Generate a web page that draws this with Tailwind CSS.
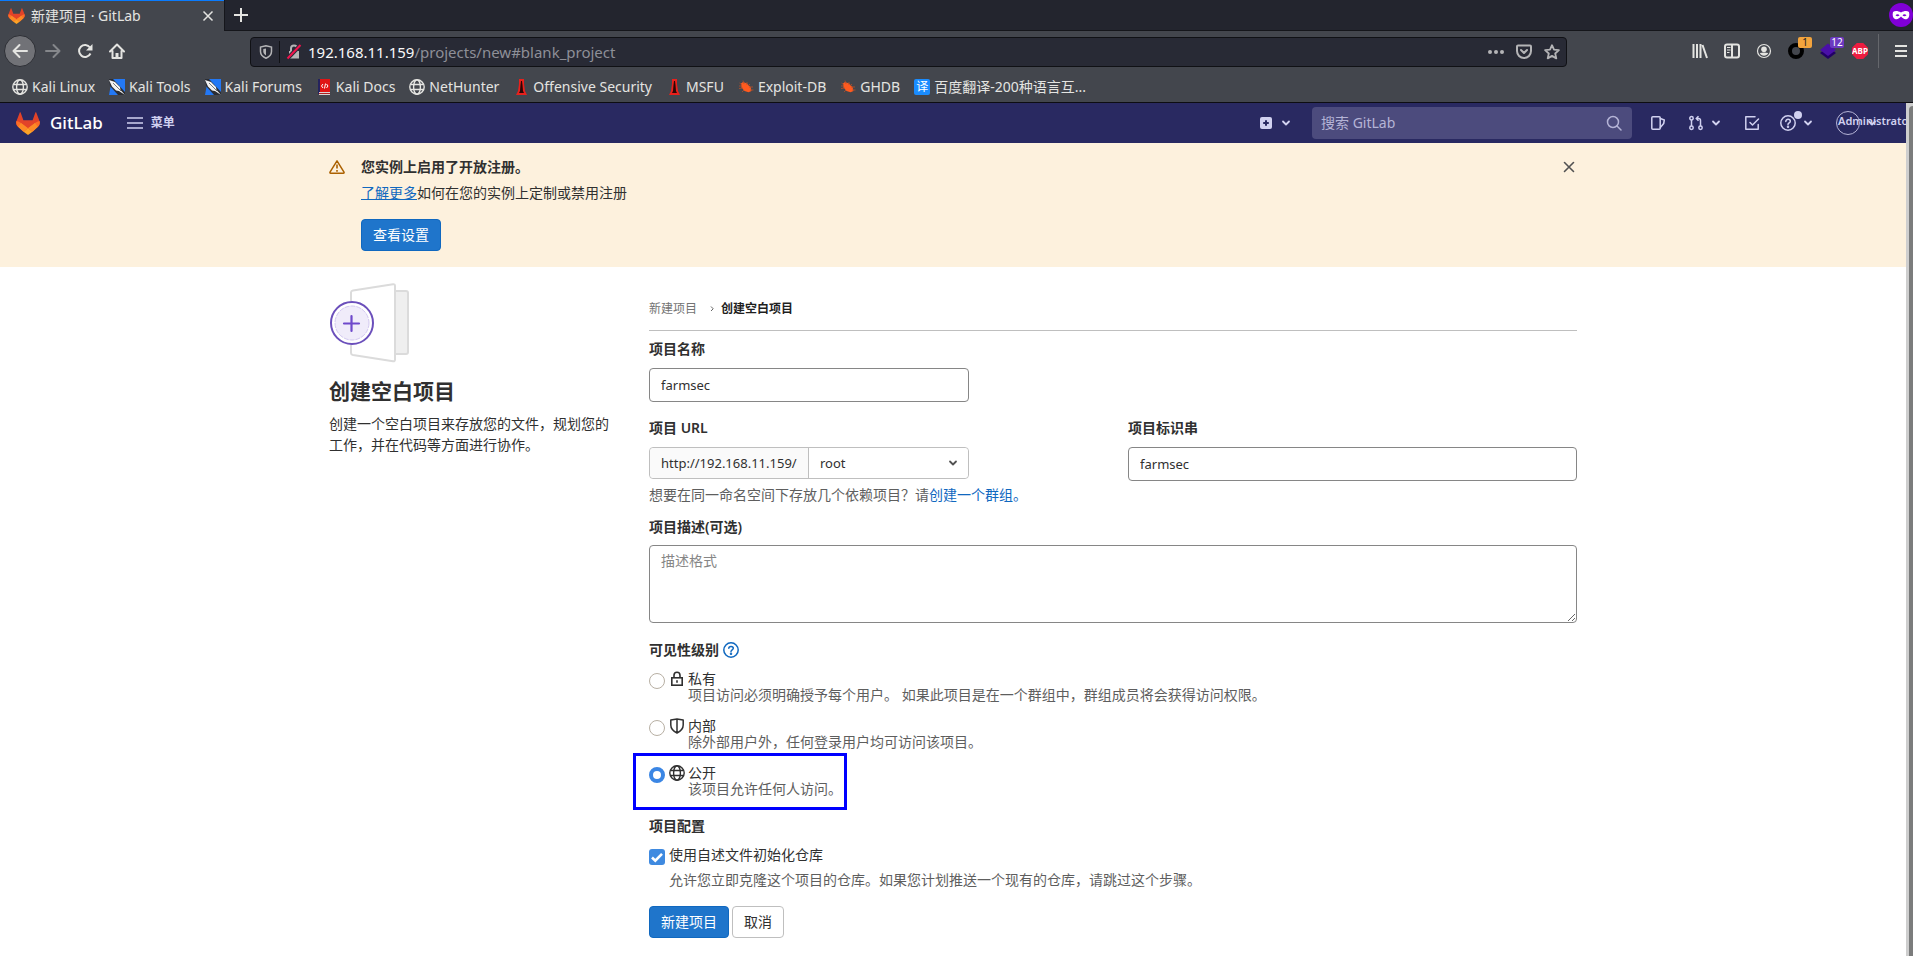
<!DOCTYPE html>
<html lang="zh-CN">
<head>
<meta charset="utf-8">
<title>新建项目 · GitLab</title>
<script src="https://cdn.jsdelivr.net/npm/@tailwindcss/browser@4"></script>
</head>
<body class="flex min-h-screen flex-col bg-white font-['Noto_Sans','Noto_Sans_CJK_SC',sans-serif] text-sm text-[#303030]">
<svg class="hidden">
  <defs>
    <symbol id="tanuki" viewBox="0 0 25 24">
      <path d="M24.5 9.500 21.200.7c-.2-.5-.9-.5-1.100 0L17.300 8.500H7.700L4.900.7C4.700.2 4 .2 3.800.7L.5 9.500c-.8 2.100-.1 4.500 1.700 5.900L12.500 23l10.300-7.600c1.800-1.400 2.500-3.800 1.700-5.900Z" fill="#e24329"/>
      <path d="M24.500 9.500c-1.700.4-3.300 1.100-4.700 2.100L12.500 17l4.700 3.600 5.600-5.200c1.800-1.400 2.500-3.800 1.700-5.900Z" fill="#fc6d26"/>
      <path d="M.5 9.500c1.700.4 3.300 1.100 4.700 2.100L12.500 17l-4.700 3.600-5.600-5.200C.4 14-.3 11.600.5 9.500Z" fill="#fc6d26"/>
      <path d="m7.800 20.600 4.700 3.400 4.700-3.400L12.500 17Z" fill="#fca326"/>
      <path d="m2.200 15.400 5.600 5.200L12.500 17 5.200 11.600Z" fill="#fc8a26"/>
      <path d="m22.800 15.400-5.600 5.200L12.500 17l7.300-5.400Z" fill="#fc8a26"/>
    </symbol>
    <symbol id="globe" viewBox="0 0 16 16">
      <g fill="none" stroke="currentColor" stroke-width="1.400"><circle cx="8" cy="8" r="7.200"/><ellipse cx="8" cy="8" rx="3.400" ry="7.200"/><path d="M1.500 5.500h13M1.500 10.500h13"/></g>
    </symbol>
    <symbol id="chev" viewBox="0 0 16 16">
      <path d="m5 6.500 3 3 3-3" fill="none" stroke="currentColor" stroke-width="1.800" stroke-linecap="round" stroke-linejoin="round"/>
    </symbol>
    <symbol id="kali" viewBox="0 0 16 16">
      <path d="M3 0h13v13L13 16H0z" fill="#2378f5"/><path d="M0 0h4l12 13v3H9L1 7z" fill="#2b2d33"/>
      <path d="M0 1l6 2 5 5 .5 3L16 16l-6-4-3-.5-4-4z" fill="#f3f3f3"/><path d="m4 4 8 8" stroke="#55585f" stroke-width=".8"/>
    </symbol>
    <symbol id="tower" viewBox="0 0 16 16">
      <path d="M6 0h5v5l1 7 2 4H3l2-4 1-7z" fill="#e8201c"/><path d="M8 2h1l.5 4 .5 6 1 2H6l1-2 .5-6z" fill="#2a0606"/>
    </symbol>
    <symbol id="bug" viewBox="0 0 16 16">
      <path d="M3 4.500 5 3l4 1.500 3.500 3.500 1 4-3 1.200L6.500 12 3.500 8.500z" fill="#ff5a1f"/>
      <path d="M1 7h3M1.500 4 4 6M5 1.500 6 5M9 3v3M12 5l-2 2M15 8h-4M15.500 11H12M1 9.500l4-.5M4 13l2-2" stroke="#b8502a" stroke-width=".8"/>
    </symbol>
  </defs>
</svg>

<!-- Browser chrome -->
<header class="flex flex-col bg-[#43464d] text-[#e4e4e1]">
  <div class="flex h-[31px] items-stretch bg-[#23252e]">
    <div class="flex w-56 items-center border-t border-[#0a7cff] bg-[#43464d] pr-2.5 pl-2">
      <svg class="mr-1.5 h-4 w-[17px]"><use href="#tanuki"/></svg>
      <span class="grow leading-5">新建项目 · GitLab</span>
      <button aria-label="关闭标签页"><svg class="size-3" viewBox="0 0 12 12" fill="none" stroke="currentColor" stroke-width="1.500"><path d="m1.500 1.500 9 9m0-9-9 9"/></svg></button>
    </div>
    <div class="flex grow items-center justify-between border-b border-l border-[#15161b] pl-2">
      <button aria-label="新标签页"><svg class="size-4" viewBox="0 0 16 16" fill="none" stroke="currentColor" stroke-width="2"><path d="M8 1v14M1 8h14"/></svg></button>
      <svg class="size-6" viewBox="0 0 24 24"><circle cx="12" cy="12" r="12" fill="#8000d7"/><path fill-rule="evenodd" d="M4 9c2-1.500 5-1.200 8 .5 3-1.700 6-2 8-.5.800 3 .2 6-2 7-2.500.8-4.500-.7-6-2.400-1.500 1.700-3.500 3.200-6 2.400C3.800 15 3.200 12 4 9Zm2.500 3.300c1.200 1.300 3 1.300 4 0-1-1.400-2.800-1.400-4 0Zm7 0c1 1.300 2.800 1.300 4 0-1.200-1.400-3-1.400-4 0Z" fill="#fff"/></svg>
    </div>
  </div>

  <div class="flex h-10 items-center pr-1.5 pl-1">
    <nav class="flex w-[246px] items-center" aria-label="浏览器导航">
      <button aria-label="后退" class="flex size-8 items-center justify-center rounded-full border border-[#2d2f35] bg-[#717277]"><svg class="size-4" viewBox="0 0 16 16" fill="none" stroke="currentColor" stroke-width="2" stroke-linecap="round" stroke-linejoin="round"><path d="M15 8H1.500M7.500 2l-6 6 6 6"/></svg></button>
      <button aria-label="前进" class="ml-[9px] text-[#85878b]"><svg class="size-4" viewBox="0 0 16 16" fill="none" stroke="currentColor" stroke-width="2" stroke-linecap="round" stroke-linejoin="round"><path d="M1 8h13.500M8.500 2l6 6-6 6"/></svg></button>
      <button aria-label="刷新" class="ml-4"><svg class="size-4" viewBox="0 0 16 16" fill="none" stroke="currentColor" stroke-width="2"><path d="M13.500 10.500A6 6 0 1 1 13 4.500"/><path d="M15.500 1v6.500H9z" fill="currentColor" stroke="none"/></svg></button>
      <button aria-label="主页" class="ml-4"><svg class="size-4" viewBox="0 0 16 16" fill="none" stroke="currentColor" stroke-width="2" stroke-linejoin="round" stroke-linecap="round"><path d="m1 8.500 7-7 7 7M3.500 8v7h9V8"/><path d="M8 10v4" stroke-width="3" stroke-linecap="butt"/></svg></button>
    </nav>
    <div class="mt-px flex h-[30px] grow items-center rounded border border-[#101115] bg-[#282a35] pr-1.5 pl-2 text-[#b4b4b6]">
      <svg class="size-3.5" viewBox="0 0 14 14" fill="none" stroke="currentColor" stroke-width="1.500"><path d="M7 .8 1.500 2v4.500c0 3 2 5.200 5.500 6.700 3.500-1.500 5.500-3.700 5.500-6.700V2z"/><path d="M7 3.500v7C5 9.300 4.300 8 4.300 6.500V4z" fill="currentColor" stroke="none"/></svg>
      <span class="ml-1.5 h-[22px] w-px bg-[#101115]"></span>
      <svg class="ml-1.5 size-4" viewBox="0 0 16 16"><path d="M3 7h10v7.500H3z" fill="currentColor"/><path d="M5 7V4.500a3 3 0 0 1 6 0V7" fill="none" stroke="currentColor" stroke-width="2"/><path d="M1.500 14.500 14.500 1" stroke="#282a35" stroke-width="4"/><path d="M1.500 14.500 14.500 1" stroke="#f0134d" stroke-width="2"/></svg>
      <div role="textbox" aria-label="地址" tabindex="0" class="ml-1.5 grow text-[15px] leading-5 text-[#8e8f98]"><span class="text-[#f9f9fa]">192.168.11.159</span>/projects/new#blank_project</div>
      <div class="flex items-center gap-3">
        <svg class="size-4" viewBox="0 0 16 16" fill="currentColor"><circle cx="2" cy="8" r="2"/><circle cx="8" cy="8" r="2"/><circle cx="14" cy="8" r="2"/></svg>
        <svg class="size-4" viewBox="0 0 16 16" fill="none" stroke="currentColor" stroke-width="2" stroke-linecap="round" stroke-linejoin="round"><path d="M2 1.500h12a1 1 0 0 1 1 1V7A7 7 0 0 1 1 7V2.500a1 1 0 0 1 1-1Z"/><path d="m5 6 3 3 3-3"/></svg>
        <svg class="size-4" viewBox="0 0 16 16" fill="none" stroke="currentColor" stroke-width="1.800" stroke-linejoin="round"><path d="m8 1.200 2 4.500 4.900.5-3.700 3.300 1.100 4.900L8 11.900l-4.300 2.500 1.100-4.900L1.100 6.200 6 5.700z"/></svg>
      </div>
    </div>
    <div class="ml-[125px] flex items-center gap-4">
      <svg class="size-4" viewBox="0 0 16 16" stroke="currentColor" stroke-width="2"><path d="M1.500 1v14M5 1v14M8.500 1v14M10.500 2l4.500 13"/></svg>
      <svg class="size-4" viewBox="0 0 16 16" fill="none" stroke="currentColor" stroke-width="2"><rect x="1" y="1.500" width="14" height="13" rx="2"/><path d="M8 2v12"/><path d="M3 4.500h3.500M3 7h3.500M3 9.500h2.500" stroke-width="1"/></svg>
      <svg class="size-4" viewBox="0 0 16 16"><circle cx="8" cy="8" r="6.500" fill="none" stroke="currentColor" stroke-width="1.200"/><circle cx="8" cy="6.200" r="2.800" fill="currentColor"/><path d="M3.800 10c2.500-.8 5.900-.8 8.400 0-1.500 3.600-6.900 3.600-8.400 0Z" fill="currentColor"/></svg>
      <div class="relative"><svg class="size-4" viewBox="0 0 16 16"><circle cx="8" cy="8" r="6" fill="none" stroke="#000" stroke-width="4"/></svg><span class="absolute -top-1.5 left-2.5 w-3.5 rounded-xs bg-[#f3a43d] text-center text-[10px] leading-[11px] text-[#222]">1</span></div>
      <div class="relative"><svg class="size-4" viewBox="0 0 16 16"><path d="m0 10 8-6 8 6-8 6z" fill="#220066"/><path d="m0 7 8-6.500L16 7l-8 6z" fill="#4a0fa8"/></svg><span class="absolute -top-1.5 left-2.5 w-3.5 rounded-xs bg-[#6c3ac0] text-center text-[10px] leading-[11px] text-white">12</span></div>
      <div class="flex size-4 items-center justify-center bg-[#ee1c40] text-[8px] leading-4 font-bold text-white [clip-path:polygon(30%_0,70%_0,100%_30%,100%_70%,70%_100%,30%_100%,0_70%,0_30%)]">ABP</div>
      <div class="-ml-1.5 flex items-center gap-4">
        <span class="h-[34px] w-px bg-[#65676c]"></span>
        <button aria-label="打开菜单"><svg class="h-4 w-3" viewBox="0 0 12 16" stroke="currentColor" stroke-width="2"><path d="M0 3h12M0 8h12M0 13h12"/></svg></button>
      </div>
    </div>
  </div>

  <nav class="flex h-8 items-center gap-3.5 border-b border-[#0d0d12] px-3 text-sm" aria-label="书签">
    <a href="#" class="flex items-center gap-1"><svg class="size-4"><use href="#globe"/></svg>Kali Linux</a>
    <a href="#" class="flex items-center gap-1"><svg class="size-4"><use href="#kali"/></svg>Kali Tools</a>
    <a href="#" class="flex items-center gap-1"><svg class="size-4"><use href="#kali"/></svg>Kali Forums</a>
    <a href="#" class="flex items-center gap-1"><svg class="size-4" viewBox="0 0 16 16"><path d="M2 0h12v13H2z" fill="#e01414"/><path d="M2 0h2v15H2z" fill="#25235e"/><path d="M3 13h11v3H3z" fill="#d9d2d2"/><path d="M3 14.500h11" stroke="#b02020"/><path d="M7 5 5.500 7 7 9M10.500 5 12 7l-1.500 2M9.500 4.500l-1 5" fill="none" stroke="#fff"/></svg>Kali Docs</a>
    <a href="#" class="flex items-center gap-1"><svg class="size-4"><use href="#globe"/></svg>NetHunter</a>
    <a href="#" class="flex items-center gap-1"><svg class="size-4"><use href="#tower"/></svg>Offensive Security</a>
    <a href="#" class="flex items-center gap-1"><svg class="size-4"><use href="#tower"/></svg>MSFU</a>
    <a href="#" class="flex items-center gap-1"><svg class="size-4"><use href="#bug"/></svg>Exploit-DB</a>
    <a href="#" class="flex items-center gap-1"><svg class="size-4"><use href="#bug"/></svg>GHDB</a>
    <a href="#" class="flex items-center gap-1"><span class="flex size-4 items-center justify-center rounded-xs bg-[#1a8cff] text-xs leading-4 text-white">译</span>百度翻译-200种语言互...</a>
  </nav>
</header>

<div class="flex grow">
  <div class="flex min-w-0 grow flex-col">
    <!-- GitLab top bar -->
    <header class="flex h-10 items-center overflow-hidden bg-[#292961] pl-4 text-[#d1d1f0]">
      <a href="#" class="flex items-center gap-2.5 text-[17px] font-medium text-white"><svg class="h-[23px] w-6"><use href="#tanuki"/></svg>GitLab</a>
      <button class="ml-6 flex items-center gap-2 text-xs font-bold"><svg class="size-4" viewBox="0 0 16 16" stroke="currentColor" stroke-width="1.500"><path d="M0 3h16M0 8h16M0 13h16"/></svg>菜单</button>
      <div class="grow"></div>
      <button aria-label="新建" class="flex items-center gap-1"><svg class="size-4" viewBox="0 0 16 16"><rect x="2" y="2" width="12" height="12" rx="2" fill="currentColor"/><path d="M8 5.200v5.600M5.200 8h5.600" stroke="#292961" stroke-width="2"/></svg><svg class="size-4"><use href="#chev"/></svg></button>
      <div class="ml-[18px] flex h-8 w-80 items-center rounded bg-[#4c4b7d] pr-2.5 pl-[9px]">
        <input aria-label="搜索 GitLab" placeholder="搜索 GitLab" class="min-w-0 grow bg-transparent text-sm outline-none placeholder:text-[#b5b4d6]">
        <svg class="size-4 text-[#b5b4d6]" viewBox="0 0 16 16" fill="none" stroke="currentColor" stroke-width="1.500" stroke-linecap="round"><circle cx="7" cy="7" r="5.500"/><path d="m11 11 4 4"/></svg>
      </div>
      <a href="#" aria-label="议题" class="ml-[18px]"><svg class="size-4" viewBox="0 0 16 16" fill="none" stroke="currentColor" stroke-width="1.500" stroke-linejoin="round"><rect x="1.800" y="1.800" width="8.400" height="12.400" rx="1"/><path d="m10.300 3.500 4 1.500-.6 3.500-3.400 4" stroke-linecap="round"/></svg></a>
      <button aria-label="合并请求" class="ml-[22px] flex items-center gap-1"><svg class="size-4" viewBox="0 0 16 16" fill="none" stroke="currentColor" stroke-width="1.500"><circle cx="3.500" cy="3.200" r="1.700"/><circle cx="3.500" cy="12.800" r="1.700"/><circle cx="12.500" cy="12.800" r="1.700"/><path d="M3.500 5v6M12.500 11V5.500a2 2 0 0 0-2-2H8.500M10.500 1.200 8.300 3.500l2.200 2.200"/></svg><svg class="size-4"><use href="#chev"/></svg></button>
      <a href="#" aria-label="待办事项" class="ml-5"><svg class="size-4" viewBox="0 0 16 16" fill="none" stroke="currentColor" stroke-width="1.500" stroke-linecap="round" stroke-linejoin="round"><path d="M11 1.800H1.800v12.400h12.400V9.500"/><path d="m6 7.500 2.500 2.500L14.500 4"/></svg></a>
      <button aria-label="帮助" class="relative ml-5 flex items-center gap-1"><svg class="size-4" viewBox="0 0 16 16" fill="none" stroke="currentColor" stroke-width="1.500"><circle cx="8" cy="8" r="7.200"/><path d="M5.800 6.500C5.800 3.500 10.300 3.800 10.300 6.300 10.300 8 8 7.800 8 9.600" stroke-linecap="round"/><circle cx="8" cy="11.800" r=".5"/></svg><span class="absolute -top-1 left-3.5 size-2 rounded-full bg-[#d1d1f0]"></span><svg class="size-4"><use href="#chev"/></svg></button>
      <button aria-label="用户菜单" class="relative ml-5 flex w-[70px] items-center"><span class="size-6 shrink-0 rounded-full border border-[#b5b4d6]"></span><svg class="ml-1 size-4 shrink-0"><use href="#chev"/></svg><span class="absolute top-0.5 left-0.5 text-[11px] leading-4 font-semibold">Administrator</span></button>
    </header>

    <!-- Sign-up warning -->
    <section class="bg-[#fdf1dd] pt-3.5 pb-4">
      <div class="mx-auto flex w-full max-w-7xl items-start px-4">
        <svg class="mt-0.5 mr-4 size-4 shrink-0 text-[#ab6100]" viewBox="0 0 16 16" fill="none" stroke="currentColor" stroke-width="1.500" stroke-linejoin="round"><path d="M8 1.800 1 13.200q-.4 1 .6 1h12.800q1 0 .6-1Z"/><path d="M8 5.500v4M8 11v1.800" stroke-width="1.600"/></svg>
        <div class="grow">
          <h2 class="leading-5 font-semibold">您实例上启用了开放注册。</h2>
          <p class="mt-1.5 leading-5"><a href="#" class="text-[#1068bf] underline">了解更多</a>如何在您的实例上定制或禁用注册</p>
          <a href="#" class="mt-4 inline-flex h-8 items-center rounded border border-[#1068bf] bg-[#1f75cb] px-[11px] text-white">查看设置</a>
        </div>
        <button aria-label="关闭" class="mt-0.5"><svg class="size-4" viewBox="0 0 16 16" fill="none" stroke="#525252" stroke-width="1.600" stroke-linecap="round"><path d="m3.500 3.500 9 9m0-9-9 9"/></svg></button>
      </div>
    </section>

    <!-- New project -->
    <main class="mx-auto flex w-full max-w-7xl grow">
      <aside class="w-1/4 shrink-0 px-4 pt-4">
        <svg class="h-20 w-[81px]" viewBox="0 0 81 80" fill="none" stroke-linejoin="round">
          <rect x="65" y="8" width="14" height="63" rx="2" fill="#efefef" stroke="#dbdbdb" stroke-width="2"/>
          <path d="M24 7.500 64 1.200q2-.2 2 1.800v73.500q0 2-2 1.800L24 72q-2-.4-2-2V9.500q0-1.600 2-2Z" fill="#fff" stroke="#dbdbdb" stroke-width="2"/>
          <circle cx="23" cy="40" r="22" fill="#fff"/><circle cx="23" cy="40" r="21" stroke="#6b4fbb" stroke-width="2"/>
          <circle cx="23" cy="40" r="17" fill="#f0ecfa" stroke="#d3c9f0" stroke-dasharray="5 1"/>
          <path d="M22.500 33v15M15 40.500h15" stroke="#6e49cb" stroke-width="2.200" stroke-linecap="round"/>
        </svg>
        <h1 class="mt-3 text-[21px] leading-8 font-semibold">创建空白项目</h1>
        <p class="mt-1.5 leading-[21px]">创建一个空白项目来存放您的文件，规划您的工作，并在代码等方面进行协作。</p>
      </aside>

      <form class="w-3/4 px-4 pt-6">
        <nav class="flex h-10 items-center border-b border-[#bfbfbf] pb-1 text-xs" aria-label="面包屑">
          <a href="#" class="text-[#737373]">新建项目</a>
          <svg class="mr-1.5 ml-3 h-2 w-1.5" viewBox="0 0 6 8" fill="none" stroke="#666" stroke-width="1"><path d="m2 1.500 2.200 2.300L2 6"/></svg>
          <a href="#" class="font-semibold text-[#1f1f1f]">创建空白项目</a>
        </nav>

        <label for="name" class="mt-2 block leading-5 font-semibold">项目名称</label>
        <input id="name" value="farmsec" class="mt-[9px] block h-[34px] w-80 rounded border border-[#868686] px-[11px] text-[13px]">

        <div class="mt-4 flex justify-between">
          <div>
            <label for="ns" class="block leading-5 font-semibold">项目 URL</label>
            <div class="mt-[9px] flex h-8 w-80 rounded border border-[#bfbfbf] text-[13px]">
              <div class="flex w-1/2 items-center rounded-l border-r border-[#bfbfbf] bg-[#fafafa] px-[11px] whitespace-nowrap">http://192.168.11.159/</div>
              <div class="relative flex grow items-center">
                <select id="ns" class="size-full appearance-none rounded-r bg-white px-[11px]"><option>root</option></select>
                <svg class="pointer-events-none absolute right-[7px] size-4 text-[#525252]"><use href="#chev"/></svg>
              </div>
            </div>
          </div>
          <div class="w-[449px]">
            <label for="slug" class="block leading-5 font-semibold">项目标识串</label>
            <input id="slug" value="farmsec" class="mt-[9px] block h-[34px] w-full rounded border border-[#868686] px-[11px] text-[13px]">
          </div>
        </div>
        <p class="mt-1 leading-5 text-[#5e5e5e]">想要在同一命名空间下存放几个依赖项目？请<a href="#" class="text-[#1068bf]">创建一个群组。</a></p>

        <label for="desc" class="mt-3 block leading-5 font-semibold">项目描述(可选)</label>
        <textarea id="desc" placeholder="描述格式" class="mt-2 block h-[78px] w-full resize rounded border border-[#868686] px-[11px] py-[5px] leading-5 placeholder:text-[#868686]"></textarea>

        <fieldset class="mt-[17px]">
          <legend class="flex items-center gap-1 leading-5 font-semibold">可见性级别<a href="#" aria-label="帮助" class="text-[#1068bf]"><svg class="size-4" viewBox="0 0 16 16" fill="none" stroke="currentColor" stroke-width="1.500"><circle cx="8" cy="8" r="7.200"/><path d="M5.800 6.300C5.800 3.800 10.300 3.800 10.300 6.300 10.300 7.800 8 8 8 9.600" stroke-linecap="round"/><circle cx="8" cy="11.800" r=".5"/></svg></a></legend>
          <div class="relative mt-[11px] flex flex-col gap-3">
            <div class="flex h-[35px] items-start">
              <input type="radio" name="vis" id="v1" class="mt-0.5 size-4 shrink-0 appearance-none rounded-full border border-[#b8b0a4]">
              <label for="v1" class="ml-1 flex leading-4"><svg class="mr-[3px] size-4 shrink-0" viewBox="0 0 16 16" fill="none" stroke="currentColor" stroke-width="1.600"><rect x="2.800" y="6.800" width="10.400" height="7.400"/><path d="M5 6.500V4.200a3 3 0 0 1 6 0v2.300M8 9.300v2.500"/></svg><span>私有<span class="block text-[#5e5e5e]">项目访问必须明确授予每个用户。 如果此项目是在一个群组中，群组成员将会获得访问权限。</span></span></label>
            </div>
            <div class="flex h-[35px] items-start">
              <input type="radio" name="vis" id="v2" class="mt-0.5 size-4 shrink-0 appearance-none rounded-full border border-[#b8b0a4]">
              <label for="v2" class="ml-1 flex leading-4"><svg class="mr-[3px] size-4 shrink-0" viewBox="0 0 16 16" fill="none" stroke="currentColor" stroke-width="1.500" stroke-linejoin="round"><path d="M8 .9 14.200 2v5c0 3.500-2 6-6.200 8-4.200-2-6.200-4.500-6.200-8V2zM8 1v14"/></svg><span>内部<span class="block text-[#5e5e5e]">除外部用户外，任何登录用户均可访问该项目。</span></span></label>
            </div>
            <div class="flex h-[35px] items-start">
              <input type="radio" name="vis" id="v3" checked class="mt-0.5 size-4 shrink-0 appearance-none rounded-full border-[#3b86e4] checked:border-4">
              <label for="v3" class="ml-1 flex leading-4"><svg class="mr-[3px] size-4 shrink-0"><use href="#globe"/></svg><span>公开<span class="block text-[#5e5e5e]">该项目允许任何人访问。</span></span></label>
            </div>
            <div class="pointer-events-none absolute -bottom-2.5 -left-4 h-[57px] w-[214px] border-3 border-[#0000ff]"></div>
          </div>
        </fieldset>

        <h2 class="mt-4 leading-5 font-semibold">项目配置</h2>
        <div class="mt-2 flex">
          <span class="relative mt-[5px] size-4 shrink-0">
            <input type="checkbox" id="readme" checked class="block size-4 appearance-none rounded-[3px] bg-[#3f8ae0]">
            <svg class="pointer-events-none absolute inset-0 size-4" viewBox="0 0 16 16" fill="none" stroke="#fff" stroke-width="2.600"><path d="m3 8.500 3.300 3.200L13 4.800"/></svg>
          </span>
          <label for="readme" class="ml-1 leading-[22px]">使用自述文件初始化仓库<span class="mt-0.5 block leading-6 text-[#5e5e5e]">允许您立即克隆这个项目的仓库。如果您计划推送一个现有的仓库，请跳过这个步骤。</span></label>
        </div>
        <div class="mt-3.5 flex gap-[3px] pb-4">
          <button type="submit" class="h-8 rounded border border-[#1068bf] bg-[#1f75cb] px-[11px] text-white">新建项目</button>
          <button type="button" class="h-8 rounded border border-[#bfbfbf] bg-white px-[11px]">取消</button>
        </div>
      </form>
    </main>
  </div>
  <div class="flex w-[7px] shrink-0 bg-[#cecece] pt-[3px] pl-[3px]"><div class="grow rounded-tl bg-[#7b7c7c]"></div></div>
</div>
</body>
</html>
